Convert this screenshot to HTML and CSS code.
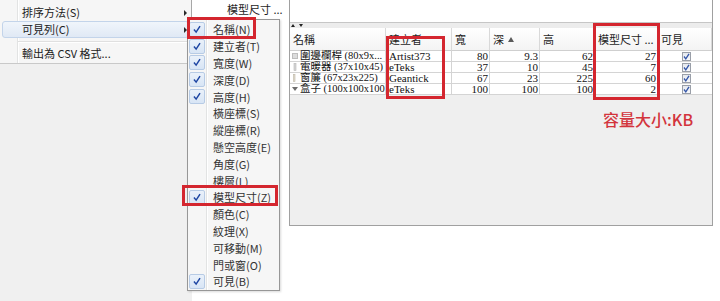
FILE: index.html
```html
<!DOCTYPE html>
<html lang="zh-Hant">
<head>
<meta charset="utf-8">
<title>可見列</title>
<link rel="stylesheet" href="styles.css">
</head>
<body>
<div class="screen">
  <div class="left">
    <div class="menu">
      <div class="mi"><span>排序方法(S)</span><i class="arrow"></i></div>
      <div class="mi hot"><span>可見列(C)</span><i class="arrow"></i></div>
      <div class="sep"></div>
      <div class="mi"><span>輸出為 CSV 格式...</span></div>
    </div>
    <div class="behind"></div>
  </div>

  <div class="mid"><span class="tip">模型尺寸 ...</span></div>

  <div class="panel">
    <div class="ptop"></div>
    <div class="splitter"><i class="up"></i><i class="down"></i></div>
    <div class="grid">
      <div class="th">名稱</div>
      <div class="th">建立者</div>
      <div class="th">寬</div>
      <div class="th">深 <i class="sort"></i></div>
      <div class="th">高</div>
      <div class="th">模型尺寸 ...</div>
      <div class="th">可見</div>

      <div class="td name"><svg class="ico" viewBox="0 0 6 8"><rect x="0.5" y="1.5" width="5" height="5" fill="#dcdcdc" stroke="#bdbdbd"/></svg><span>圍邊欄桿 (80x9x...</span></div>
      <div class="td">Artist373</div>
      <div class="td num">80</div>
      <div class="td num">9.3</div>
      <div class="td num">62</div>
      <div class="td num">27</div>
      <div class="td vis"><i class="cb"><svg viewBox="0 0 9 9"><path d="M2 4.5 L3.8 6.8 L7 1.8" fill="none" stroke="#3456a8" stroke-width="1.3"/></svg></i></div>

      <div class="td name"><svg class="ico" viewBox="0 0 6 8"><rect x="2" y="0.5" width="2" height="7" fill="#d6d6d6" stroke="#b5b5b5" stroke-width="0.6"/></svg><span>電暖器 (37x10x45)</span></div>
      <div class="td">eTeks</div>
      <div class="td num">37</div>
      <div class="td num">10</div>
      <div class="td num">45</div>
      <div class="td num">7</div>
      <div class="td vis"><i class="cb"><svg viewBox="0 0 9 9"><path d="M2 4.5 L3.8 6.8 L7 1.8" fill="none" stroke="#3456a8" stroke-width="1.3"/></svg></i></div>

      <div class="td name"><svg class="ico" viewBox="0 0 6 8"><rect x="1.5" y="0.5" width="1.5" height="7" fill="#e2dccf" stroke="#bdb6a6" stroke-width="0.6"/></svg><span>窗簾 (67x23x225)</span></div>
      <div class="td">Geantick</div>
      <div class="td num">67</div>
      <div class="td num">23</div>
      <div class="td num">225</div>
      <div class="td num">60</div>
      <div class="td vis"><i class="cb"><svg viewBox="0 0 9 9"><path d="M2 4.5 L3.8 6.8 L7 1.8" fill="none" stroke="#3456a8" stroke-width="1.3"/></svg></i></div>

      <div class="td name"><svg class="ico" viewBox="0 0 6 8"><path d="M0 2 L6 2 L3 6 Z" fill="#6e6e6e"/></svg><span>盒子 (100x100x100</span></div>
      <div class="td">eTeks</div>
      <div class="td num">100</div>
      <div class="td num">100</div>
      <div class="td num">100</div>
      <div class="td num">2</div>
      <div class="td vis"><i class="cb"><svg viewBox="0 0 9 9"><path d="M2 4.5 L3.8 6.8 L7 1.8" fill="none" stroke="#3456a8" stroke-width="1.3"/></svg></i></div>
    </div>
    <div class="pbody"><span class="note">容量大小:KB</span></div>
  </div>

  <div class="rest"></div>

  <div class="submenu">
    <div class="si on"><i class="chk"><svg viewBox="0 0 16 15"><path d="M4.5 7.5 L7 10.5 L11.5 3.5" fill="none" stroke="#1e45a2" stroke-width="1.7"/></svg></i><span>名稱(N)</span></div>
    <div class="si on"><i class="chk"><svg viewBox="0 0 16 15"><path d="M4.5 7.5 L7 10.5 L11.5 3.5" fill="none" stroke="#1e45a2" stroke-width="1.7"/></svg></i><span>建立者(T)</span></div>
    <div class="si on"><i class="chk"><svg viewBox="0 0 16 15"><path d="M4.5 7.5 L7 10.5 L11.5 3.5" fill="none" stroke="#1e45a2" stroke-width="1.7"/></svg></i><span>寬度(W)</span></div>
    <div class="si on"><i class="chk"><svg viewBox="0 0 16 15"><path d="M4.5 7.5 L7 10.5 L11.5 3.5" fill="none" stroke="#1e45a2" stroke-width="1.7"/></svg></i><span>深度(D)</span></div>
    <div class="si on"><i class="chk"><svg viewBox="0 0 16 15"><path d="M4.5 7.5 L7 10.5 L11.5 3.5" fill="none" stroke="#1e45a2" stroke-width="1.7"/></svg></i><span>高度(H)</span></div>
    <div class="si"><i class="nochk"></i><span>橫座標(S)</span></div>
    <div class="si"><i class="nochk"></i><span>縱座標(R)</span></div>
    <div class="si"><i class="nochk"></i><span>懸空高度(E)</span></div>
    <div class="si"><i class="nochk"></i><span>角度(G)</span></div>
    <div class="si"><i class="nochk"></i><span>樓層(L)</span></div>
    <div class="si on"><i class="chk"><svg viewBox="0 0 16 15"><path d="M4.5 7.5 L7 10.5 L11.5 3.5" fill="none" stroke="#1e45a2" stroke-width="1.7"/></svg></i><span>模型尺寸(Z)</span></div>
    <div class="si"><i class="nochk"></i><span>顏色(C)</span></div>
    <div class="si"><i class="nochk"></i><span>紋理(X)</span></div>
    <div class="si"><i class="nochk"></i><span>可移動(M)</span></div>
    <div class="si"><i class="nochk"></i><span>門或窗(O)</span></div>
    <div class="si on"><i class="chk"><svg viewBox="0 0 16 15"><path d="M4.5 7.5 L7 10.5 L11.5 3.5" fill="none" stroke="#1e45a2" stroke-width="1.7"/></svg></i><span>可見(B)</span></div>
  </div>

  <div class="mark mark-name"></div>
  <div class="mark mark-size-item"></div>
  <div class="mark mark-creator"></div>
  <div class="mark mark-size-col"></div>
</div>
</body>
</html>
```

FILE: styles.css
```css
* { box-sizing: border-box; }
html, body { margin: 0; padding: 0; }
body {
  width: 720px;
  height: 301px;
  overflow: hidden;
  background: #fff;
  font-family: "Noto Sans CJK TC", "Noto Sans", sans-serif;
  font-size: 11px;
  color: #1e1e1e;
}
i { font-style: normal; display: block; }

.screen {
  position: relative;
  display: flex;
  width: 720px;
  height: 301px;
}

/* ---------- left context menu ---------- */
.left {
  width: 192px;
  display: flex;
  flex-direction: column;
}
.menu {
  height: 64px;
  padding: 4px 2px 0 2px;
  border-right: 1px solid #a7a7a7;
  border-bottom: 1px solid #c9c9c9;
  background:
    linear-gradient(to right, transparent 17px, #e2e3e3 17px, #e2e3e3 18px, #ffffff 18px, #ffffff 19px, transparent 19px),
    #f6f6f6;
}
.mi {
  height: 17px;
  line-height: 17px;
  padding: 0 1px 0 20px;
  display: flex;
  align-items: center;
  justify-content: space-between;
  color: #222;
}
.mi.hot {
  border: 1px solid #c3d4ea;
  border-radius: 3px;
  padding-left: 19px;
  padding-right: 0;
  background: linear-gradient(#f0f5fb, #e0e9f5);
}
.arrow {
  width: 0;
  height: 0;
  border-left: 3px solid #2a2a2a;
  border-top: 3px solid transparent;
  border-bottom: 3px solid transparent;
  margin-right: 1px;
}
.sep {
  height: 7px;
  margin-left: 16px;
  background:
    linear-gradient(#e0e0e0, #e0e0e0) 0 3px / 100% 1px no-repeat,
    linear-gradient(#ffffff, #ffffff) 0 4px / 100% 1px no-repeat;
}
.behind {
  flex: 1;
  background: #f0f0f0;
}

/* ---------- middle strip ---------- */
.mid {
  width: 97px;
  padding: 2px 0 0 35px;
  line-height: 14px;
  background: #fff;
}
.tip { color: #1e1e1e; }

/* ---------- furniture panel ---------- */
.panel {
  width: 424px;
  height: 226px;
  display: flex;
  flex-direction: column;
  border-left: 1px solid #a0a0a0;
  border-right: 1px solid #a0a0a0;
  border-bottom: 1px solid #a0a0a0;
}
.ptop {
  height: 23px;
  background: #fff;
  border-bottom: 1px solid #c6c6c6;
}
.splitter {
  height: 5px;
  background: #ececec;
  display: flex;
  align-items: center;
  gap: 4px;
  padding-left: 1px;
}
.splitter .up {
  width: 0; height: 0;
  border-left: 2px solid transparent;
  border-right: 2px solid transparent;
  border-bottom: 3px solid #222;
}
.splitter .down {
  width: 0; height: 0;
  border-left: 2px solid transparent;
  border-right: 2px solid transparent;
  border-top: 3px solid #222;
}

.grid {
  display: grid;
  grid-template-columns: 96px 66px 38px 50px 55px 63px 54px;
  grid-auto-rows: 11px;
  grid-template-rows: 23px;
  background: #fff;
}
.th {
  height: 23px;
  line-height: 21px;
  padding-left: 3px;
  border-right: 1px solid #d9d9d9;
  border-bottom: 1px solid #cfcfcf;
  background: linear-gradient(#ffffff, #f4f4f4);
  color: #1e1e1e;
  white-space: nowrap;
  display: flex;
  align-items: center;
  gap: 4px;
}
.th:last-child { border-right: none; }
.sort {
  width: 0; height: 0;
  border-left: 3px solid transparent;
  border-right: 3px solid transparent;
  border-bottom: 5px solid #5a5a5a;
  margin-top: 1px;
}
.td {
  height: 11px;
  line-height: 10px;
  font-family: "Liberation Serif", "Noto Sans CJK TC", serif;
  font-size: 11px;
  color: #111;
  padding: 0 1px 0 3px;
  border-right: 1px solid #d4d4d4;
  border-bottom: 1px solid #d4d4d4;
  white-space: nowrap;
  overflow-x: clip;
  overflow-y: visible;
}
.td:nth-child(7n) { border-right: none; }
.num { text-align: right; }
.name {
  display: flex;
  align-items: center;
  gap: 2px;
  padding-left: 2px;
}
.name span {
  font-size: 10.5px;
  min-width: 0;
}
.ico { width: 6px; height: 8px; flex: none; }
.vis {
  display: flex;
  justify-content: center;
  align-items: center;
}
.cb {
  width: 9px;
  height: 9px;
  border: 1px solid #9a9fa8;
  background: linear-gradient(#e6e9ee, #f7f8fa);
  position: relative;
}
.cb svg {
  position: absolute;
  left: -1px;
  top: -1px;
  width: 9px;
  height: 9px;
}

.pbody {
  flex: 1;
  background: #efefef;
  padding: 13px 0 0 313px;
}
.note {
  font-size: 16px;
  line-height: 22px;
  color: #d3343c;
  font-weight: 500;
}

.rest { flex: 1; background: #fff; }

/* ---------- submenu ---------- */
.submenu {
  position: absolute;
  left: 187px;
  top: 19px;
  width: 93px;
  height: 272px;
  border: 1px solid #979797;
  padding: 1px 0;
  background:
    linear-gradient(to right, transparent 18px, #e2e3e3 18px, #e2e3e3 19px, #ffffff 19px, #ffffff 20px, transparent 20px),
    #f6f6f6;
  box-shadow: 1px 1px 2px rgba(0,0,0,0.15);
}
.si {
  height: 16.8px;
  display: flex;
  align-items: center;
  color: #333;
  line-height: 16px;
}
.chk, .nochk {
  width: 16px;
  height: 15px;
  margin-left: 1px;
  margin-right: 8px;
  flex: none;
}
.chk {
  border: 1px solid #b7cbe5;
  border-radius: 2px;
  background: linear-gradient(#eaf1fa, #d8e5f5);
}
.chk svg { width: 14px; height: 13px; display: block; }

/* ---------- red annotation boxes ---------- */
.mark {
  position: absolute;
  border: 3px solid #d4262f;
}
.mark-name { left: 187px; top: 17px; width: 69px; height: 22px; }
.mark-size-item { left: 182px; top: 185px; width: 96px; height: 21px; }
.mark-creator { left: 386px; top: 36px; width: 59px; height: 63px; }
.mark-size-col { left: 593px; top: 23px; width: 67px; height: 77px; }
```
